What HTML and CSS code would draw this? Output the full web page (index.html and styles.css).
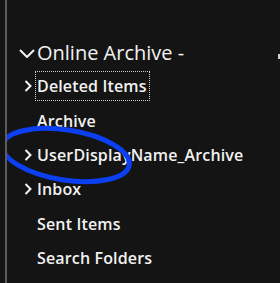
FILE: index.html
```
<!DOCTYPE html>
<html lang="en">
<head>
  <meta charset="UTF-8" />
  <title>Folder pane</title>
  <link rel="stylesheet" href="styles.css">
</head>
<body>
  <div class="pane">
    <div class="folders">
      <div class="account">
        <svg class="chev-down" width="16" height="9" viewBox="0 0 16 9"><path d="M1 1 L8 8 L15 1" fill="none" stroke="#f2f2f2" stroke-width="2"/></svg>
        <span>Online Archive -</span>
      </div>
      <div class="row">
        <svg class="chev" width="8" height="12" viewBox="0 0 8 12"><path d="M1.5 1 L6.5 6 L1.5 11" fill="none" stroke="#f2f2f2" stroke-width="2"/></svg>
        <span class="label focused">Deleted Items</span>
      </div>
      <div class="row">
        <span class="chev-space"></span>
        <span class="label">Archive</span>
      </div>
      <div class="row">
        <svg class="chev" width="8" height="12" viewBox="0 0 8 12"><path d="M1.5 1 L6.5 6 L1.5 11" fill="none" stroke="#f2f2f2" stroke-width="2"/></svg>
        <span class="label">UserDisplayName_Archive</span>
      </div>
      <div class="row">
        <svg class="chev" width="8" height="12" viewBox="0 0 8 12"><path d="M1.5 1 L6.5 6 L1.5 11" fill="none" stroke="#f2f2f2" stroke-width="2"/></svg>
        <span class="label">Inbox</span>
      </div>
      <div class="row">
        <span class="chev-space"></span>
        <span class="label">Sent Items</span>
      </div>
      <div class="row">
        <span class="chev-space"></span>
        <span class="label">Search Folders</span>
      </div>
    </div>
    <span class="edge-mark"></span>
    <svg class="circle" width="150" height="70" viewBox="0 0 150 70">
      <ellipse cx="72" cy="35" rx="64" ry="25" fill="none" stroke="#0b3ff0" stroke-width="5" transform="rotate(9 72 35)"/>
    </svg>
  </div>
</body>
</html>
```

FILE: styles.css
```
body {
  margin: 0;
  background: #141414;
  font-family: "Open Sans", "Noto Sans", sans-serif;
  color: #f2f2f2;
}
.pane {
  position: relative;
  height: 283px;
  overflow: hidden;
  margin-left: 5px;
  border-left: 2px solid #5c5c5c;
}
.folders {
  display: flex;
  flex-direction: column;
  padding-top: 37px;
  padding-left: 12px;
}
.account {
  display: flex;
  align-items: center;
  gap: 2px;
  height: 30px;
  font-size: 20px;
  margin-bottom: 2px;
}
.chev-down {
  margin-top: 2px;
}
.row {
  display: flex;
  align-items: center;
  height: 34.4px;
  font-size: 16px;
  font-weight: 600;
  letter-spacing: 0.15px;
  padding-left: 5px;
}
.chev, .chev-space {
  width: 8px;
  flex: none;
  margin-right: 3px;
}
.label {
  padding: 2px 1px;
  border: 1px dotted transparent;
}
.label.focused {
  border-color: #cfcfcf;
  padding: 3px 2px 3px 1px;
}
.edge-mark {
  position: absolute;
  right: 0;
  top: 54px;
  width: 2px;
  height: 5px;
  background: #d0d0d0;
}
.circle {
  position: absolute;
  left: -13px;
  top: 120px;
}
```
